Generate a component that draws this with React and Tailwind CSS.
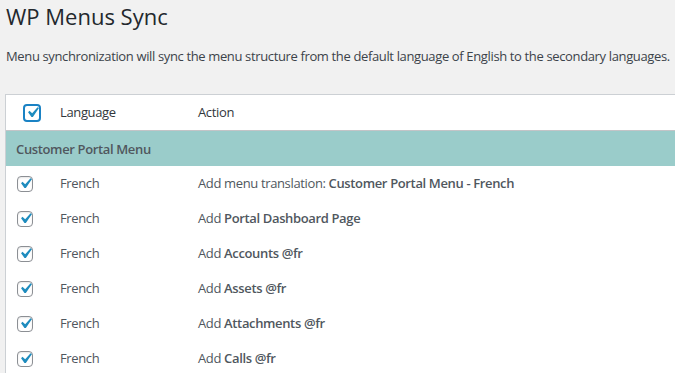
import React from "react";

const rows = [
  { pre: "Add menu translation: ", name: "Customer Portal Menu - French" },
  { pre: "Add ", name: "Portal Dashboard Page" },
  { pre: "Add ", name: "Accounts @fr" },
  { pre: "Add ", name: "Assets @fr" },
  { pre: "Add ", name: "Attachments @fr" },
  { pre: "Add ", name: "Calls @fr" },
];

function Check({ big }) {
  return (
    <span
      className={
        big
          ? "flex items-center justify-center w-[18px] h-[18px] rounded-[4px] border-2 border-[#1a82c4] bg-white"
          : "flex items-center justify-center w-4 h-4 rounded-[4px] border border-[#8c8f94] bg-white shadow-[inset_0_1px_2px_rgba(0,0,0,0.1)]"
      }
    >
      <svg viewBox="0 0 20 20" className="w-[21px] h-[21px] shrink-0 -m-[3px]">
        <path
          d="M14.83 4.89l1.34.94-5.81 8.38H9.02L5.78 9.67l1.34-1.25 2.57 2.4z"
          fill="#1e8cbe"
        />
      </svg>
    </span>
  );
}

export default function App() {
  return (
    <div
      className="min-h-screen bg-[#f1f1f1] overflow-hidden text-[13px] tracking-[-0.36px]"
      style={{ fontFamily: "'Open Sans', 'Noto Sans', Arial, sans-serif" }}
    >
      <h1 className="pl-[6px] pt-[1px] text-[22px] leading-[30px] font-normal tracking-normal text-[#23282d]">
        WP Menus Sync
      </h1>
      <p className="pl-[6px] mt-[11px] leading-[28px] text-[#3c434a] whitespace-nowrap">
        Menu synchronization will sync the menu structure from the default language of English to the secondary languages.
      </p>

      <div className="ml-[5px] mt-[24px] w-[720px] bg-white border-l border-t border-[#ccd0d4]">
        <div className="flex items-center h-[36px] border-b border-[#c3c4c7] text-[#32373c]">
          <div className="w-[54px] pl-[17px]">
            <Check big />
          </div>
          <div className="w-[138px] pt-[1px]">Language</div>
          <div className="pt-[1px]">Action</div>
        </div>

        <div className="flex items-center h-[35px] pl-[10px] pt-[2px] bg-[#9accca] font-semibold text-[#50575e]">
          Customer Portal Menu
        </div>

        {rows.map((r, i) => (
          <div key={i} className="flex items-center h-[35px] text-[#50575e]">
            <div className="w-[54px] pl-[11px]">
              <Check />
            </div>
            <div className="w-[138px] pt-[1px]">French</div>
            <div className="pt-[1px]">
              {r.pre}
              <span className="font-semibold">{r.name}</span>
            </div>
          </div>
        ))}
      </div>
    </div>
  );
}
